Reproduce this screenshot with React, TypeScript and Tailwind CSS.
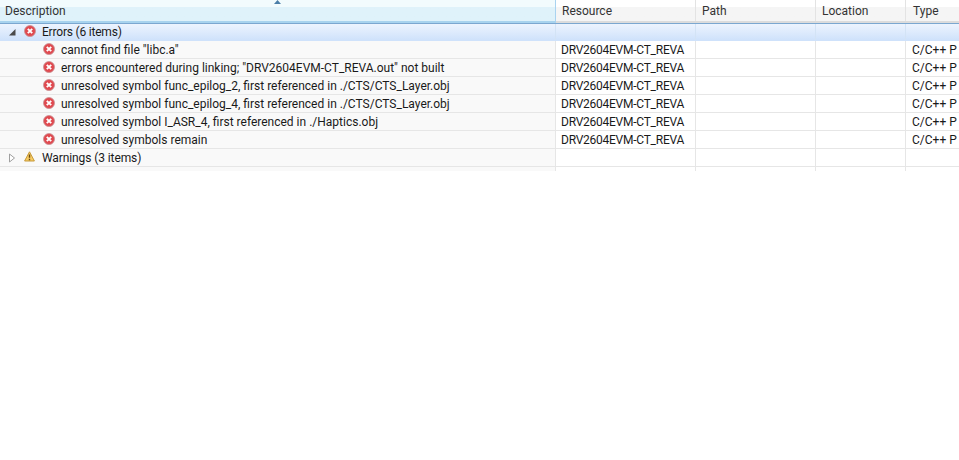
const font = "font-['Roboto','Open_Sans',sans-serif]";

const rows = [
  'cannot find file "libc.a"',
  'errors encountered during linking; "DRV2604EVM-CT_REVA.out" not built',
  'unresolved symbol func_epilog_2, first referenced in ./CTS/CTS_Layer.obj',
  'unresolved symbol func_epilog_4, first referenced in ./CTS/CTS_Layer.obj',
  'unresolved symbol I_ASR_4, first referenced in ./Haptics.obj',
  'unresolved symbols remain',
];

function ErrorIcon() {
  return (
    <svg width="12" height="12" viewBox="0 0 12 12" className="block shrink-0">
      <circle cx="6" cy="6" r="5.5" fill="#e0494f" stroke="#c98f92" strokeWidth="0.8" />
      <path d="M3.8 3.8 8.2 8.2M8.2 3.8 3.8 8.2" stroke="#fff" strokeWidth="1.9" />
    </svg>
  );
}

function WarningIcon() {
  return (
    <svg width="11" height="11" viewBox="0 0 11 11" className="block shrink-0">
      <path d="M5.5 .8 10.4 10H.6Z" fill="#f7cb63" stroke="#c79a3a" strokeWidth="1" strokeLinejoin="round" />
      <path d="M5.5 3.4V6.8M5.5 7.8V9.2" stroke="#6b4a12" strokeWidth="1.4" />
    </svg>
  );
}

function Cells({ selected }: { selected?: boolean }) {
  const line = selected ? 'border-[#d3e3f5]' : 'border-[#e6e6e6]';
  return (
    <>
      <div className={`h-full w-[140px] shrink-0 border-r ${line}`} />
      <div className={`h-full w-[120px] shrink-0 border-r ${line}`} />
      <div className={`h-full w-[90px] shrink-0 border-r ${line}`} />
      <div className="flex-1" />
    </>
  );
}

function Row({ text }: { text: string }) {
  return (
    <div className="flex h-[18px] items-center border-b border-[#e6e6e6] bg-white text-[12px] leading-[17px] text-[#1a1a1a]">
      <div className="flex h-full w-[556px] shrink-0 items-center border-r border-[#e6e6e6] bg-[#f9f9f9] pl-[43px]">
        <span className="-mt-[2px]"><ErrorIcon /></span>
        <span className="ml-[6px] whitespace-nowrap pt-[2px]">{text}</span>
      </div>
      <div className="flex h-full w-[140px] shrink-0 items-center border-r border-[#e6e6e6] pl-[5px] pt-[2px] tracking-[-0.25px]">DRV2604EVM-CT_REVA</div>
      <div className="h-full w-[120px] shrink-0 border-r border-[#e6e6e6]" />
      <div className="h-full w-[90px] shrink-0 border-r border-[#e6e6e6]" />
      <div className="flex h-full w-[53px] items-center overflow-hidden whitespace-nowrap pl-[6px] pt-[2px]">C/C++ P</div>
    </div>
  );
}

export default function App() {
  return (
    <div className={`h-[460px] w-[959px] overflow-hidden bg-white ${font}`}>
      <div className="relative flex h-[23px] border-b-2 border-[#dcdcdc] bg-gradient-to-b from-white from-[35%] to-[#f5f5f5] to-[35%] text-[12px] text-[#333]">
        <div className="-mb-[2px] flex w-[556px] shrink-0 items-center border-r border-b-2 border-r-[#a9d3f0] border-b-[#a8d3ee] bg-gradient-to-b from-[#f2fbfd] from-[35%] to-[#dff2fa] to-[35%] pl-[5px]">
          Description
        </div>
        <div className="flex w-[140px] shrink-0 items-center border-r border-[#e3e3e3] pl-[6px]">Resource</div>
        <div className="flex w-[120px] shrink-0 items-center border-r border-[#e3e3e3] pl-[6px]">Path</div>
        <div className="flex w-[90px] shrink-0 items-center border-r border-[#e3e3e3] pl-[6px]">Location</div>
        <div className="flex flex-1 items-center pl-[7px]">Type</div>
        <svg width="7" height="4" viewBox="0 0 7 4" className="absolute left-[274px] top-0">
          <path d="M3.5 0 7 4H0Z" fill="#4a7ea8" />
        </svg>
      </div>

      <div className="flex h-[18px] items-center border-y border-t-[#7ba7d0] border-b-[#cfe2fb] bg-gradient-to-b from-[#edf4fe] to-[#cfe2fb] text-[12px] text-[#1a1a1a]">
        <div className="flex h-full w-[556px] shrink-0 items-center border-r border-[#d3e3f5] pl-[8px]">
          <svg width="8" height="8" viewBox="0 0 8 8" className="block shrink-0">
            <path d="M7.5 1V7.5H1Z" fill="#4a4a4a" />
          </svg>
          <span className="ml-[8px] -mt-[3px]"><ErrorIcon /></span>
          <span className="ml-[6px] tracking-[-0.2px]">Errors (6 items)</span>
        </div>
        <Cells selected />
      </div>

      {rows.map((text) => (
        <Row key={text} text={text} />
      ))}

      <div className="flex h-[18px] items-center border-b border-[#e6e6e6] text-[12px] text-[#1a1a1a]">
        <div className="flex h-full w-[556px] shrink-0 items-center border-r border-[#e6e6e6] bg-[#f9f9f9] pl-[8px]">
          <svg width="8" height="10" viewBox="0 0 8 10" className="block shrink-0">
            <path d="M1.5 1 6.5 5 1.5 9Z" fill="#fff" stroke="#a0a0a0" />
          </svg>
          <span className="ml-[8px] -mt-[2px]"><WarningIcon /></span>
          <span className="ml-[7px] tracking-[-0.1px]">Warnings (3 items)</span>
        </div>
        <Cells />
      </div>
      <div className="flex h-[4px]">
        <div className="w-[556px] shrink-0 border-r border-[#e6e6e6] bg-[#f9f9f9]" />
        <Cells />
      </div>
    </div>
  );
}
